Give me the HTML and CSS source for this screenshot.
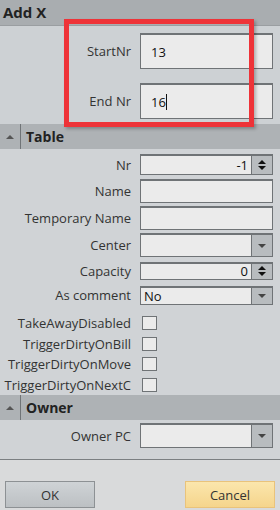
FILE: index.html
```html
<!DOCTYPE html>
<html>
<head>
<meta charset="utf-8">
<title>Add X</title>
<link rel="stylesheet" href="styles.css">
</head>
<body>
<div class="dialog">
  <div class="title">Add X</div>

  <div class="range">
    <div class="row r-start"><label>StartNr</label><div class="box big">13</div></div>
    <div class="row r-end"><label>End Nr</label><div class="box big">16<span class="caret"></span></div></div>
    <div class="mark"></div>
  </div>

  <div class="group"><span class="tog"><svg width="8" height="5" viewBox="0 0 8 5"><path d="M0 5 L4 1 L8 5 Z" fill="#555"/></svg></span><span class="gname">Table</span></div>

  <div class="props">
    <div class="row r-nr"><label>Nr</label><div class="box num">-1<span class="spin"><svg width="12" height="14" viewBox="0 0 12 14"><path d="M2 6 L6 2 L10 6 Z M2 8 L10 8 L6 12 Z" fill="#111"/></svg></span></div></div>
    <div class="row r-name"><label>Name</label><div class="box"></div></div>
    <div class="row r-temp"><label>Temporary Name</label><div class="box"></div></div>
    <div class="row r-center"><label>Center</label><div class="box combo"><span class="drop"><svg width="8" height="4" viewBox="0 0 8 4"><path d="M0 0 L8 0 L4 4 Z" fill="#444"/></svg></span></div></div>
    <div class="row r-cap"><label>Capacity</label><div class="box num">0<span class="spin"><svg width="12" height="14" viewBox="0 0 12 14"><path d="M2 6 L6 2 L10 6 Z M2 8 L10 8 L6 12 Z" fill="#111"/></svg></span></div></div>
    <div class="row r-comment"><label>As comment</label><div class="box combo">No<span class="drop"><svg width="8" height="4" viewBox="0 0 8 4"><path d="M0 0 L8 0 L4 4 Z" fill="#444"/></svg></span></div></div>
    <div class="row r-chk first"><label>TakeAwayDisabled</label><span class="chk"></span></div>
    <div class="row r-chk"><label>TriggerDirtyOnBill</label><span class="chk"></span></div>
    <div class="row r-chk"><label>TriggerDirtyOnMove</label><span class="chk"></span></div>
    <div class="row r-chk"><label>TriggerDirtyOnNextC</label><span class="chk"></span></div>
  </div>

  <div class="group"><span class="tog"><svg width="8" height="5" viewBox="0 0 8 5"><path d="M0 5 L4 1 L8 5 Z" fill="#555"/></svg></span><span class="gname">Owner</span></div>

  <div class="props owner">
    <div class="row r-owner"><label>Owner PC</label><div class="box combo"><span class="drop"><svg width="8" height="4" viewBox="0 0 8 4"><path d="M0 0 L8 0 L4 4 Z" fill="#444"/></svg></span></div></div>
  </div>

  <div class="footer">
    <button class="btn ok">OK</button>
    <button class="btn cancel">Cancel</button>
  </div>
</div>
</body>
</html>
```

FILE: styles.css
```css
html, body {
	margin: 0;
	padding: 0;
}
body {
	background-color: #d0d3d6;
	font-family: "Open Sans", "Noto Sans", "Liberation Sans", sans-serif;
	font-size: 13px;
	color: #333;
}
.dialog {
	width: 280px;
	height: 510px;
	display: flex;
	flex-direction: column;
	overflow: hidden;
}
.title {
	height: 25px;
	line-height: 25px;
	padding-left: 3px;
	background: #a9adb0;
	border-bottom: 1px solid #9a9ea1;
	font-weight: bold;
	font-size: 15px;
	color: #222;
}

/* rows: label column ends at x 131, box from 140 to 273 */
.row {
	display: grid;
	grid-template-columns: 131px 133px;
	column-gap: 9px;
	align-items: center;
}
.row label {
	text-align: right;
	white-space: nowrap;
}
.box {
	box-sizing: border-box;
	height: 22px;
	background: #ebebeb;
	border: 1px solid #6f7376;
	border-top-width: 2px;
	display: flex;
	align-items: center;
	padding-left: 3px;
	position: relative;
	color: #111;
}

.range {
	position: relative;
	height: 98px;
	background: #cdd1d4;
}
.range .row { height: 36px; }
.range .r-start { margin-top: 7px; }
.range .r-end { margin-top: 14px; }
.box.big {
	height: 36px;
	padding-left: 10px;
	font-size: 13px;
}
.caret {
	display: inline-block;
	width: 1px;
	height: 16px;
	background: #111;
}
.mark {
	position: absolute;
	left: 64px;
	top: -7px;
	width: 180px;
	height: 98px;
	border: 5px solid #ee3338;
	box-shadow: 2px 2px 3px rgba(0,0,0,0.25);
}

.group {
	height: 25px;
	background: #aeb2b5;
	display: flex;
	align-items: center;
	font-weight: bold;
	font-size: 14px;
	color: #222;
}
.tog {
	width: 20px;
	height: 25px;
	border-right: 1px solid #707477;
	display: flex;
	align-items: center;
	justify-content: center;
}
.gname { padding-left: 5px; }

.props { padding-top: 2px; }
.r-nr { height: 27px; }
.r-nr .box { height: 21px; }
.r-name { height: 26px; }
.r-name .box { height: 24px; }
.r-temp { height: 28px; }
.r-temp .box { height: 24px; }
.r-center { height: 26px; }
.r-center .box { height: 24px; }
.r-cap { height: 25px; }
.r-cap .box { height: 18px; }
.r-comment { height: 24px; }
.r-comment .box { height: 19px; }
.r-chk { height: 20.5px; }
.r-chk.first { margin-top: 6px; }

.num {
	justify-content: flex-end;
	padding-right: 24px;
}
.spin, .drop {
	position: absolute;
	right: 0;
	top: 0;
	bottom: 0;
	width: 20px;
	background: #b8bcbf;
	border-left: 1px solid #6f7376;
	display: flex;
	align-items: center;
	justify-content: center;
}
.chk {
	box-sizing: border-box;
	width: 15px;
	height: 14px;
	margin-left: 2px;
	background: #ebebeb;
	border: 1px solid #6f7376;
}

.owner { padding-top: 2px; padding-bottom: 10px; }
.r-owner { height: 27px; }
.r-owner .box { height: 25px; }

.footer {
	flex: 1;
	background: #d9dadb;
	border-top: 1px solid #7b7f82;
	display: flex;
	justify-content: space-between;
	align-items: flex-start;
	padding: 21px 5px 0 5px;
}
.btn {
	width: 90px;
	height: 27px;
	font-family: inherit;
	font-size: 13px;
	color: #333;
}
.ok {
	background: linear-gradient(#cfd3d6, #bcc0c3);
	border: 1px solid #8d9194;
}
.cancel {
	background: linear-gradient(#fbe6ad, #f5d58c);
	border: 1px solid #e9c37b;
}
```
